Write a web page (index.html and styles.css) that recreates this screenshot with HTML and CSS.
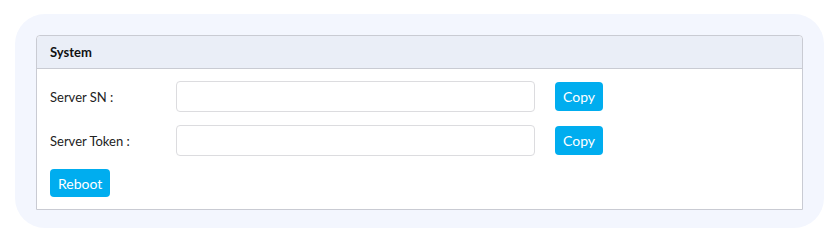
FILE: index.html
```html
<!DOCTYPE html>
<html lang="en">
<head>
    <meta charset="UTF-8">
    <meta name="viewport" content="width=device-width, initial-scale=1.0">
    <title>System</title>
    <link rel="stylesheet" href="styles.css">
</head>
<body>
    <div class="wrapper">
        <div class="panel">
            <div class="panel-heading">System</div>
            <div class="panel-body">
                <div class="form-row">
                    <label for="serverSn">Server SN :</label>
                    <input type="text" id="serverSn">
                    <button class="btn">Copy</button>
                </div>
                <div class="form-row">
                    <label for="serverToken">Server Token :</label>
                    <input type="text" id="serverToken">
                    <button class="btn">Copy</button>
                </div>
                <div class="form-row">
                    <button class="btn btn-reboot">Reboot</button>
                </div>
            </div>
        </div>
    </div>
</body>
</html>
```

FILE: styles.css
```css
body {
    font-family: 'Lato', 'Liberation Sans', sans-serif;
    margin: 0;
    padding: 14px 15px;
    background: #fff;
    color: #222;
}

.wrapper {
    width: 767px;
    background: #f3f6fe;
    border-radius: 30px;
    padding: 21px 21px 18px;
}

.panel {
    background: #fff;
    border: 1px solid #c9cbd3;
    border-radius: 4px 4px 0 0;
}

.panel-heading {
    height: 32px;
    line-height: 32px;
    padding: 0 13px;
    background: #eaeef7;
    border-bottom: 1px solid #c9cbd3;
    border-radius: 4px 4px 0 0;
    font-size: 13px;
    font-weight: bold;
    color: #111;
}

.panel-body {
    padding: 12px 13px 12px;
    display: flex;
    flex-direction: column;
    gap: 13px;
}

.form-row {
    display: flex;
    align-items: center;
}

label {
    width: 126px;
    font-size: 13px;
    color: #222;
}

input {
    width: 359px;
    height: 31px;
    border: 1px solid #dcdcdf;
    border-radius: 4px;
    box-sizing: border-box;
    outline: none;
    margin-right: 20px;
}

.btn {
    height: 29px;
    padding: 0 8px;
    font-family: inherit;
    font-size: 14px;
    color: #fff;
    background: #00adef;
    border: none;
    border-radius: 4px;
    cursor: pointer;
}

.btn-reboot {
    height: 28px;
}
```
